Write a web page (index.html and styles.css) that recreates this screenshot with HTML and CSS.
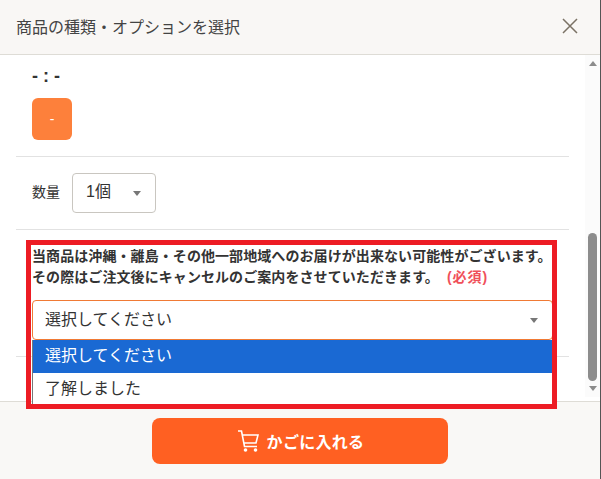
FILE: index.html
```html
<!DOCTYPE html>
<html lang="ja">
<head>
    <meta charset="UTF-8">
    <meta name="viewport" content="width=device-width, initial-scale=1.0">
    <title>商品の種類・オプションを選択</title>
    <link rel="stylesheet" href="styles.css">
</head>
<body>
    <div class="modal">
        <div class="modal-head">
            <span class="modal-title">商品の種類・オプションを選択</span>
            <svg class="close-icon" width="16" height="16" viewBox="0 0 16 16" aria-hidden="true">
                <path d="M1 1 L15 15 M15 1 L1 15" fill="none" stroke="#7b7265" stroke-width="1.5"/>
            </svg>
        </div>
        <div class="modal-body">
            <div class="content">
                <div class="row row-option">
                    <div class="option-label">- : -</div>
                    <div class="swatch">-</div>
                </div>
                <div class="row row-qty">
                    <span class="qty-label">数量</span>
                    <div class="select select-qty">
                        <span>1個</span>
                        <span class="caret"></span>
                    </div>
                </div>
                <div class="row row-notice">
                    <p class="notice">当商品は沖縄・離島・その他一部地域へのお届けが出来ない可能性がございます。<br>その際はご注文後にキャンセルのご案内をさせていただきます。<span class="required">(必須)</span></p>
                    <div class="select-wrap">
                        <div class="select select-notice">
                            <span>選択してください</span>
                            <span class="caret"></span>
                        </div>
                        <ul class="dropdown">
                            <li class="dropdown-item is-active">選択してください</li>
                            <li class="dropdown-item">了解しました</li>
                        </ul>
                    </div>
                </div>
            </div>
            <div class="scrollbar">
                <span class="arrow-up"></span>
                <div class="thumb-track"><div class="thumb"></div></div>
                <span class="arrow-down"></span>
            </div>
        </div>
        <div class="modal-foot">
            <button class="cart-btn" type="button">
                <svg width="22" height="24" viewBox="0 0 22 24" aria-hidden="true">
                    <path d="M1 2 H4.5 L7.5 17.5 H20 M5.3 6 H21 L19 14 H7" fill="none" stroke="#fff" stroke-width="1.6"/>
                    <circle cx="8.5" cy="21" r="1.8" fill="#fff"/>
                    <circle cx="18.5" cy="21" r="1.8" fill="#fff"/>
                </svg>
                <span>かごに入れる</span>
            </button>
        </div>
        <div class="highlight"></div>
    </div>
</body>
</html>
```

FILE: styles.css
```css
* {
    box-sizing: border-box;
}
body {
    margin: 0;
    font-family: "Liberation Sans", "Noto Sans CJK JP", sans-serif;
    color: #333;
    background: #fff;
}
.modal {
    position: relative;
    width: 601px;
    height: 479px;
    display: flex;
    flex-direction: column;
    overflow: hidden;
    background: #fff;
    border-right: 1px solid #555;
}
.modal-head {
    height: 55px;
    flex-shrink: 0;
    display: flex;
    justify-content: space-between;
    align-items: center;
    padding: 0 22px 2px 16px;
    background: #f9f7f5;
    border-bottom: 1px solid #dedcd6;
}
.modal-title {
    font-size: 16px;
    color: #444;
}
.modal-body {
    height: 346px;
    flex-shrink: 0;
    display: flex;
}
.content {
    flex: 1;
    min-width: 0;
    padding: 0 16px;
}
.row {
    border-bottom: 1px solid #e2e2e2;
}
.row-option {
    height: 102px;
    padding: 11px 16px 0;
}
.option-label {
    font-size: 18px;
    line-height: 20px;
    font-weight: bold;
}
.swatch {
    width: 40px;
    height: 42px;
    margin-top: 12px;
    display: flex;
    justify-content: center;
    align-items: center;
    border-radius: 6px;
    background: #fd803b;
    color: #fff;
    font-size: 14px;
}
.row-qty {
    height: 73px;
    padding: 0 16px;
    display: flex;
    align-items: center;
    gap: 12px;
}
.qty-label {
    font-size: 14px;
    line-height: 18px;
    padding-bottom: 2px;
}
.select {
    display: flex;
    justify-content: space-between;
    align-items: center;
    height: 40px;
    background: #fff;
    border: 1px solid #c9c6c0;
    border-radius: 4px;
    font-size: 16px;
    line-height: 20px;
}
.select-qty span:first-child {
    padding-bottom: 3px;
}
.select-notice span:first-child {
    padding-bottom: 1px;
}
.select-qty {
    width: 84px;
    padding: 0 14px 0 13px;
}
.caret {
    width: 0;
    height: 0;
    border-left: 4.5px solid transparent;
    border-right: 4.5px solid transparent;
    border-top: 5px solid #777;
}
.row-notice {
    height: 127px;
    padding: 16px 16px 0;
}
.notice {
    margin: 0;
    font-size: 14px;
    line-height: 21px;
    font-weight: bold;
    letter-spacing: 0.08px;
    white-space: nowrap;
}
.required {
    margin-left: 8px;
    letter-spacing: 1px;
    color: #f0505a;
}
.select-wrap {
    position: relative;
    z-index: 1;
    margin-top: 12px;
}
.select-notice {
    padding: 0 14px 0 12px;
    border-color: #f07a35;
}
.dropdown {
    position: absolute;
    top: 40px;
    left: 0;
    width: 100%;
    margin: 0;
    padding: 0;
    list-style: none;
    background: #fff;
    border-left: 1px solid #777;
    font-size: 16px;
}
.dropdown-item {
    height: 33px;
    padding-left: 12px;
    line-height: 32px;
}
.is-active {
    background: #1a69d3;
    color: #fff;
}
.scrollbar {
    width: 15px;
    height: 342px;
    flex-shrink: 0;
    display: flex;
    flex-direction: column;
    align-items: center;
    background: #fbfbfb;
}
.arrow-up,
.arrow-down {
    width: 0;
    height: 0;
    border-left: 4.5px solid transparent;
    border-right: 4.5px solid transparent;
}
.arrow-up {
    margin-top: 6px;
    border-bottom: 5px solid #8c8c8c;
}
.arrow-down {
    margin-bottom: 6px;
    border-top: 5px solid #8c8c8c;
}
.thumb-track {
    flex: 1;
    width: 9px;
    display: flex;
    align-items: flex-end;
    padding-bottom: 5px;
}
.thumb {
    width: 9px;
    height: 148px;
    border-radius: 5px;
    background: #8c8c8c;
}
.modal-foot {
    flex: 1;
    display: flex;
    justify-content: center;
    padding-top: 16px;
    padding-right: 1px;
    background: #f9f8f6;
    border-top: 1px solid #dedcd6;
}
.cart-btn {
    width: 296px;
    height: 46px;
    display: flex;
    justify-content: center;
    align-items: center;
    gap: 8px;
    padding: 0 0 0 2px;
    border: 0;
    border-radius: 8px;
    background: #ff6022;
    color: #fff;
    font-family: inherit;
    font-size: 16px;
    font-weight: bold;
    letter-spacing: 0.3px;
}
.highlight {
    position: absolute;
    z-index: 2;
    left: 26px;
    top: 240px;
    width: 531px;
    height: 169px;
    border: 5px solid #ed1c24;
}
```
